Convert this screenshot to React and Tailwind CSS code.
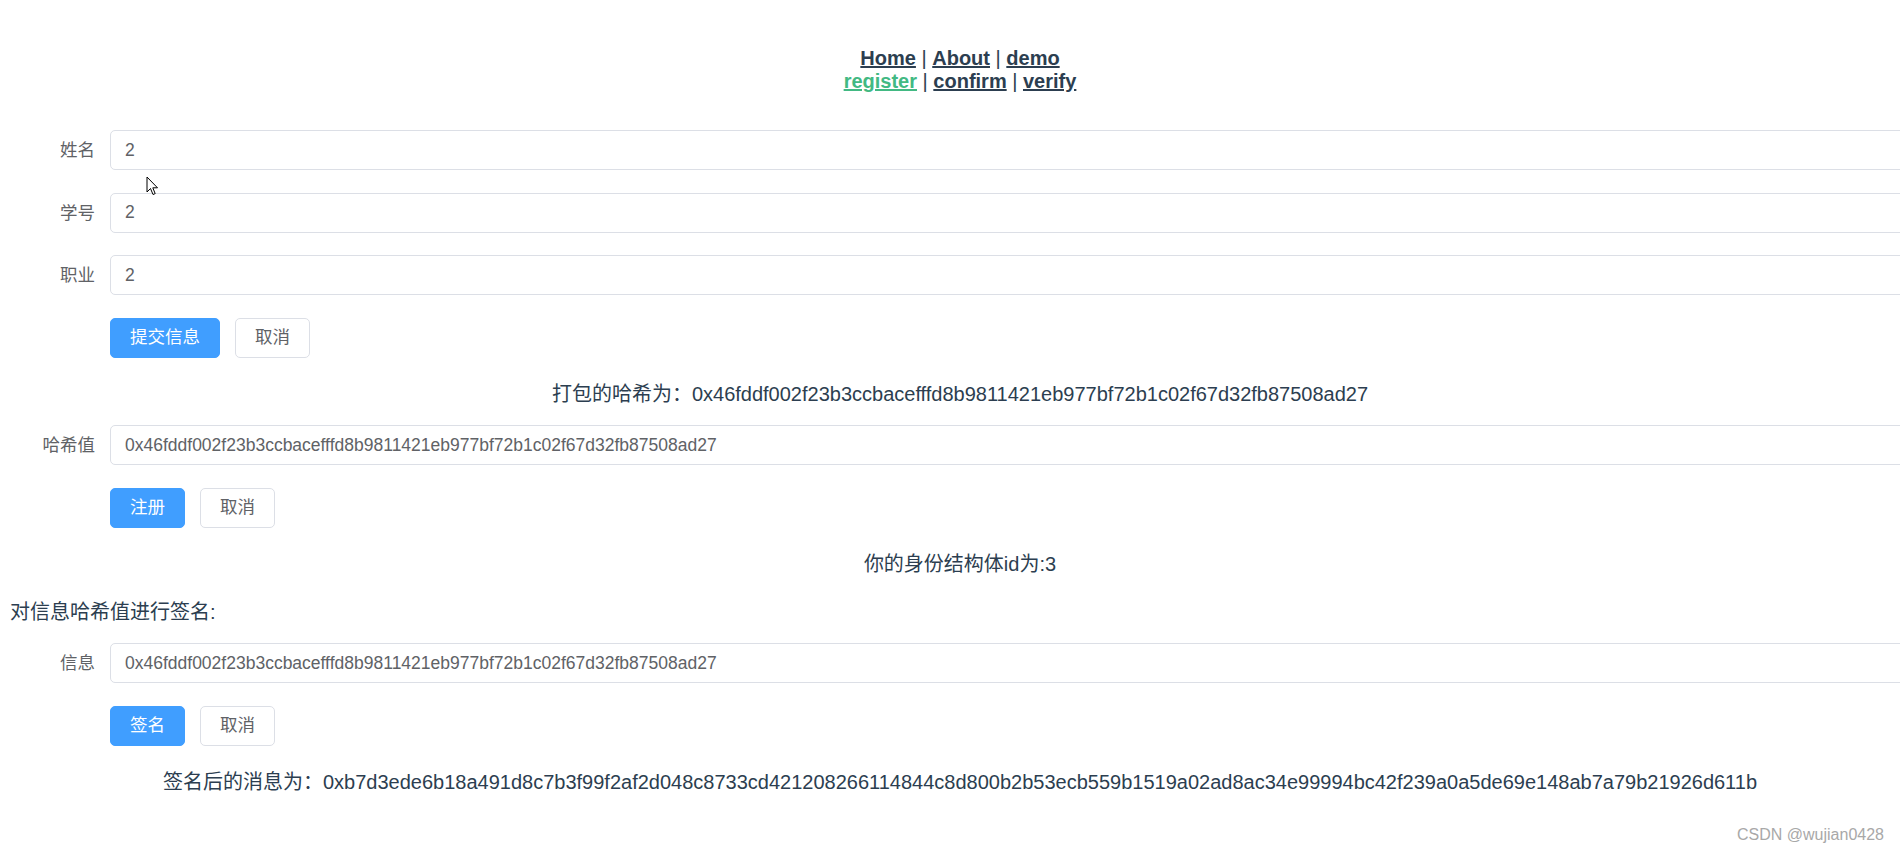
import React from "react";

const FONT = "font-['Liberation_Sans','Noto_Sans_CJK_SC',sans-serif]";

function Field({ label, value }) {
  return (
    <div className="flex mb-[22.5px]">
      <label className="w-[100px] shrink-0 pr-[15px] text-right text-[17.5px] leading-[40px] text-[#606266]">
        {label}
      </label>
      <div className="flex-1 h-[40px] border border-[#dcdfe6] rounded-[5px] px-[14px] flex items-center">
        <input
          readOnly
          value={value}
          className={`w-full bg-transparent outline-none text-[17.5px] text-[#606266] ${FONT}`}
        />
      </div>
    </div>
  );
}

function Buttons({ primary }) {
  return (
    <div className="flex mb-[22.5px] pl-[100px] gap-[15px]">
      <button className="h-[40px] px-[19px] rounded-[5px] bg-[#409eff] border border-[#409eff] text-white text-[17.5px] leading-none">
        {primary}
      </button>
      <button className="h-[40px] px-[19px] rounded-[5px] bg-white border border-[#dcdfe6] text-[#606266] text-[17.5px] leading-none">
        取消
      </button>
    </div>
  );
}

function NavLink({ children, active }) {
  return (
    <a
      href="#"
      className={`font-bold underline ${active ? "text-[#42b983]" : "text-[#2c3e50]"}`}
    >
      {children}
    </a>
  );
}

export default function App() {
  return (
    <div className={`relative w-[1900px] h-[855px] overflow-hidden bg-white ${FONT}`}>
      <div className="w-[1920px] px-[10px] pt-[10px] text-[#2c3e50]">
        <nav className="pt-[37px] pb-[37px] text-center text-[20px] leading-[23px]">
          <NavLink>Home</NavLink> | <NavLink>About</NavLink> | <NavLink>demo</NavLink>
          <br />
          <NavLink active>register</NavLink> | <NavLink>confirm</NavLink> | <NavLink>verify</NavLink>
        </nav>

        <Field label="姓名" value="2" />
        <Field label="学号" value="2" />
        <Field label="职业" value="2" />
        <Buttons primary="提交信息" />

        <div className="text-center text-[20px] leading-[28px] mb-[17px]">
          打包的哈希为：0x46fddf002f23b3ccbacefffd8b9811421eb977bf72b1c02f67d32fb87508ad27
        </div>

        <Field label="哈希值" value="0x46fddf002f23b3ccbacefffd8b9811421eb977bf72b1c02f67d32fb87508ad27" />
        <Buttons primary="注册" />

        <div className="text-center text-[20px] leading-[28px] mb-[20px]">你的身份结构体id为:3</div>

        <div className="text-left text-[20px] leading-[28px] mb-[17px]">对信息哈希值进行签名:</div>

        <Field label="信息" value="0x46fddf002f23b3ccbacefffd8b9811421eb977bf72b1c02f67d32fb87508ad27" />
        <Buttons primary="签名" />

        <div className="text-center text-[20px] leading-[28px]">
          签名后的消息为：0xb7d3ede6b18a491d8c7b3f99f2af2d048c8733cd421208266114844c8d800b2b53ecb559b1519a02ad8ac34e99994bc42f239a0a5de69e148ab7a79b21926d611b
        </div>
      </div>

      <svg
        className="absolute left-[146px] top-[176px]"
        width="13"
        height="20"
        viewBox="0 0 13 20"
      >
        <path
          d="M1 1 L1 16 L4.5 12.5 L7 18.5 L9.2 17.6 L6.8 11.8 L11.5 11.8 Z"
          fill="white"
          stroke="black"
          strokeWidth="1"
          strokeLinejoin="round"
        />
      </svg>

      <div className="absolute right-[16px] bottom-[8px] text-[16px] text-[#a8a8a8]">
        CSDN @wujian0428
      </div>
    </div>
  );
}
